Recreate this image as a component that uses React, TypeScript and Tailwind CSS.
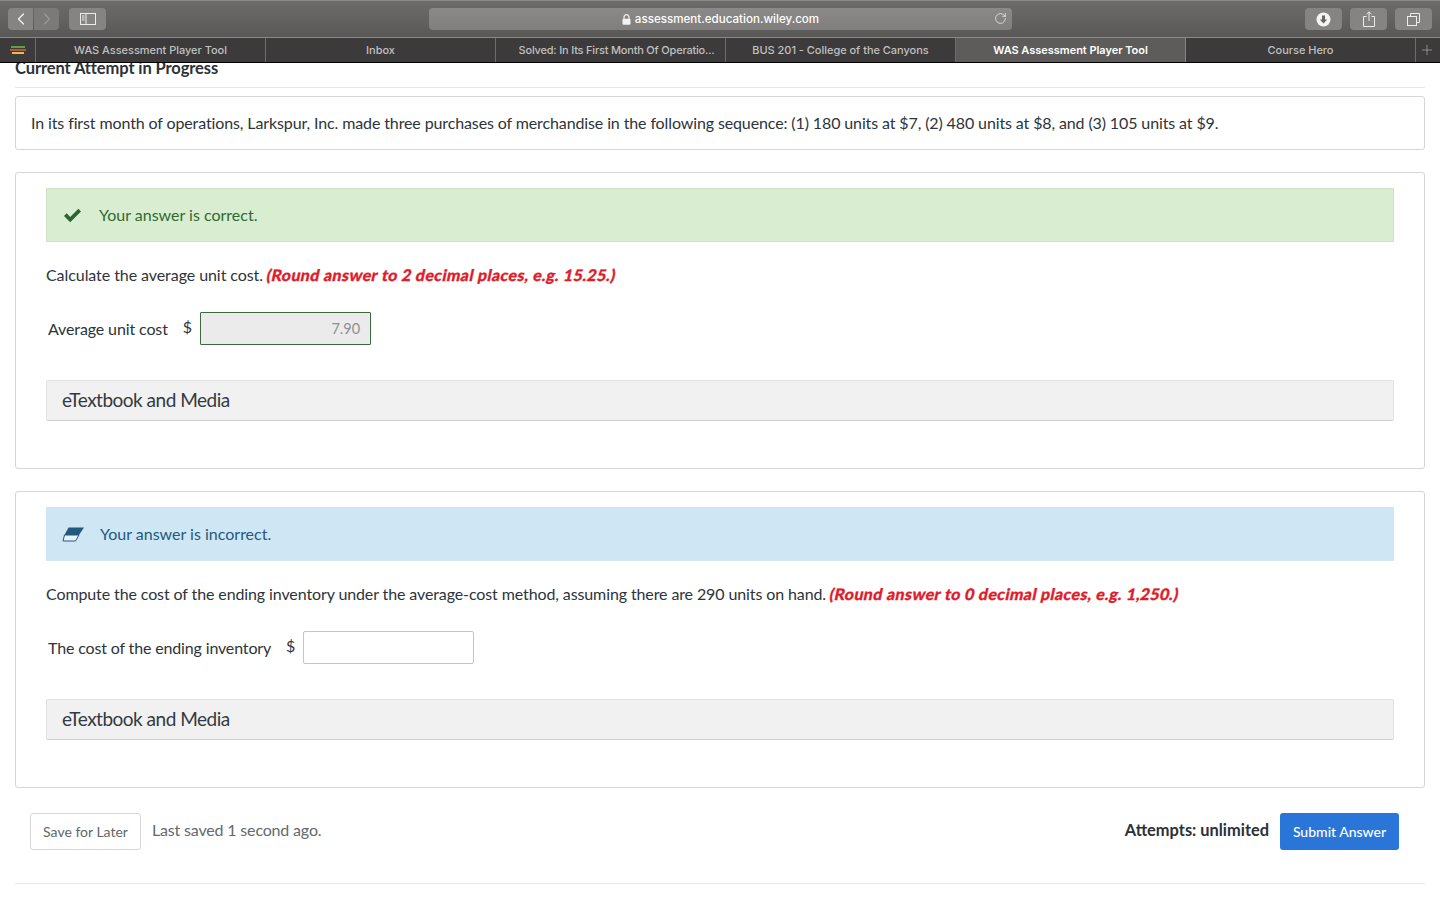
import { ChevronLeft, ChevronRight, Plus, RotateCw } from "lucide-react"

const tabs = [
  "WAS Assessment Player Tool",
  "Inbox",
  "Solved: In Its First Month Of Operatio...",
  "BUS 201 - College of the Canyons",
  "WAS Assessment Player Tool",
  "Course Hero",
]

function Toolbar() {
  return (
    <div className="flex h-[37px] items-center border-t border-[#8a8987] bg-gradient-to-b from-[#6d6c6a] to-[#595856] pl-2 pr-[8px]">
      <div className="flex gap-px">
        <div className="flex h-[22px] w-[25px] items-center justify-center rounded-l-[4px] bg-[#858482]">
          <ChevronLeft size={20} strokeWidth={1.6} className="text-[#f1f1f1]" />
        </div>
        <div className="flex h-[22px] w-[25px] items-center justify-center rounded-r-[4px] bg-[#7b7a78]">
          <ChevronRight size={20} strokeWidth={1.4} className="text-[#9a9997]" />
        </div>
      </div>
      <div className="ml-[10px] flex h-[22px] w-[37px] items-center justify-center rounded-[4px] bg-[#858482]">
        <svg width="16" height="12" viewBox="0 0 16 12" fill="none" stroke="#ececec" strokeWidth="1">
          <rect x="0.5" y="0.5" width="15" height="11" />
          <path d="M6 0.5v11" />
          <path d="M2 3h2.5M2 5h2.5M2 7h2.5" />
        </svg>
      </div>
      <div className="relative ml-[323px] flex h-[22px] w-[583px] items-center justify-center rounded-[4px] bg-gradient-to-b from-[#8b8a88] to-[#807f7d] text-[11.6px] text-white">
        <svg width="9" height="11" viewBox="0 0 9 11" className="mr-[4px]">
          <path d="M2 5V3.2a2.5 2.5 0 0 1 5 0V5" fill="none" stroke="#f2f2f2" strokeWidth="1.2" />
          <rect x="0.5" y="4.8" width="8" height="6" rx="1" fill="#f2f2f2" />
        </svg>
        <span className="mt-[1px] font-['Inter','Liberation_Sans',sans-serif] font-medium">assessment.education.wiley.com</span>
        <RotateCw size={13} strokeWidth={1.4} className="absolute right-[5px] top-[4px] text-[#eeeeee]" />
      </div>
      <div className="ml-auto flex gap-[8px]">
        <div className="flex h-[22px] w-[37px] items-center justify-center rounded-[4px] bg-[#858482]">
          <svg width="15" height="15" viewBox="0 0 15 15">
            <circle cx="7.5" cy="7.5" r="7" fill="#f4f4f4" />
            <path d="M6 3.5h3v4h2.2L7.5 11.5 3.8 7.5H6z" fill="#666563" />
          </svg>
        </div>
        <div className="flex h-[22px] w-[37px] items-center justify-center rounded-[4px] bg-[#858482]">
          <svg width="12" height="16" viewBox="0 0 12 16" fill="none" stroke="#ececec" strokeWidth="1">
            <path d="M3.5 5.5H0.5v10h11v-10H8.5" />
            <path d="M6 10V1M3.5 3.2L6 0.8l2.5 2.4" />
          </svg>
        </div>
        <div className="flex h-[22px] w-[37px] items-center justify-center rounded-[4px] bg-[#858482]">
          <svg width="13" height="13" viewBox="0 0 13 13" fill="none" stroke="#ececec" strokeWidth="1">
            <rect x="0.5" y="3.5" width="9" height="9" />
            <path d="M3.5 3.5v-3h9v9h-3" />
          </svg>
        </div>
      </div>
    </div>
  )
}

function TabBar() {
  return (
    <div className="flex h-[26px] border-y border-t-[#8a8987] border-b-black bg-[#3c3a3a] text-center font-['Inter','Liberation_Sans',sans-serif] text-[11px] tracking-[-0.03px] text-[#c0c0c0]">
      <div className="flex w-[36px] shrink-0 flex-col items-center justify-center gap-px border-r border-[#6e6d6c]">
        <div className="h-[2px] w-[14px] bg-[#5f9e46]" />
        <div className="h-[2px] w-[16px] bg-[#b4553c]" />
        <div className="h-[2px] w-[12px] bg-[#d9c25a]" />
      </div>
      {tabs.map((t, i) => (
        <div
          key={i}
          className={
            i === 4
              ? "flex w-[230px] shrink-0 items-center justify-center border-r border-[#858483] bg-[#5d5c5a] font-semibold text-white"
              : "flex w-[230px] shrink-0 items-center justify-center border-r border-[#6e6d6c] font-medium"
          }
        >
          <span className={i === 2 ? "ml-[12px] truncate tracking-[-0.2px]" : "truncate px-1"}>{t}</span>
        </div>
      ))}
      <div className="flex flex-1 items-center justify-center pr-[2px]">
        <Plus size={16} strokeWidth={1} className="text-[#b5b5b5]" />
      </div>
    </div>
  )
}

function Media() {
  return (
    <div className="flex h-[41px] items-center rounded-[2px] border border-[#e2e2e2] border-b-[#cfcfcf] bg-[#f1f1f1] pl-[15px] text-[19px] tracking-[-0.5px] text-[#333a41]">
      eTextbook and Media
    </div>
  )
}

export default function App() {
  return (
    <div className="h-[900px] w-[1440px] overflow-hidden bg-white font-['Lato','Liberation_Sans',sans-serif] text-[#2d343a]">
      <div className="relative z-10">
        <Toolbar />
        <TabBar />
      </div>
      <div className="px-[15px]">
        <div className="-mt-[3px] h-[28px] border-b border-[#e8e8e8] text-[16.5px] font-bold leading-[17px] tracking-[-0.1px] text-[#2a3138]">
          Current Attempt in Progress
        </div>
        <div className="mt-[8px] flex h-[54px] items-center rounded-[3px] border border-[#d6d6d6] pl-[15px] text-[16px] tracking-[-0.118px]">
          In its first month of operations, Larkspur, Inc. made three purchases of merchandise in the following sequence: (1) 180 units at $7, (2) 480 units at $8, and (3) 105 units at $9.
        </div>

        <div className="mt-[22px] h-[297px] rounded-[3px] border border-[#d6d6d6] px-[30px] pt-[15px]">
          <div className="flex h-[54px] items-center border border-[#cfe3c4] bg-[#d9edd0] pl-[16px] text-[16px] text-[#2f6a33]">
            <svg width="19" height="15" viewBox="0 0 19 15" fill="#2b6530">
              <path d="M1 8l2.6-2.7 3.6 3.6L15.4 0.8 18 3.5 7.2 14.3z" />
            </svg>
            <span className="ml-[17px]">Your answer is correct.</span>
          </div>
          <div className="mt-[22px] h-[22px] text-[16px] leading-[22px]">
            <span className="tracking-[-0.07px]">Calculate the average unit cost.</span>{" "}
            <span className="inline-block -skew-x-12 font-black tracking-[0.38px] text-[#e01c2a] [-webkit-text-stroke:0.3px_#e01c2a]">(Round answer to 2 decimal places, e.g. 15.25.)</span>
          </div>
          <div className="mt-[26px] flex items-center pl-[2px]">
            <span className="mt-[1px] text-[16px] tracking-[-0.12px]">Average unit cost</span>
            <span className="ml-[15px] -mt-[3px] text-[16px]">$</span>
            <div className="ml-[8px] flex h-[33px] w-[171px] items-center justify-end rounded-[1px] border border-[#386b3e] bg-[#ebebeb] pr-[10px] text-[14.5px] text-[#8f8f8f]">
              7.90
            </div>
          </div>
          <div className="mt-[35px]">
            <Media />
          </div>
        </div>

        <div className="mt-[22px] h-[297px] rounded-[3px] border border-[#d6d6d6] px-[30px] pt-[15px]">
          <div className="flex h-[54px] items-center bg-[#cfe6f5] pl-[16px] text-[16px] text-[#22597f]">
            <svg width="23" height="15" viewBox="0 0 23 15">
              <path d="M6.5 0.5H22L17 8H2.5z" fill="#22597f" />
              <path d="M2.5 8H17L13.5 14H1z" fill="#e8f2f9" stroke="#22597f" strokeWidth="1" />
            </svg>
            <span className="ml-[15px]">Your answer is incorrect.</span>
          </div>
          <div className="mt-[22px] h-[22px] text-[16px] leading-[22px]">
            <span className="tracking-[-0.11px]">Compute the cost of the ending inventory under the average-cost method, assuming there are 290 units on hand.</span>{" "}
            <span className="inline-block -skew-x-12 font-black tracking-[0.38px] text-[#e01c2a] [-webkit-text-stroke:0.3px_#e01c2a]">(Round answer to 0 decimal places, e.g. 1,250.)</span>
          </div>
          <div className="mt-[26px] flex items-center pl-[2px]">
            <span className="mt-[1px] text-[16px] tracking-[-0.15px]">The cost of the ending inventory</span>
            <span className="ml-[15px] -mt-[3px] text-[16px]">$</span>
            <div className="ml-[8px] h-[33px] w-[171px] rounded-[2px] border border-[#c4c4c4] bg-white" />
          </div>
          <div className="mt-[35px]">
            <Media />
          </div>
        </div>

        <div className="mt-[25px] flex items-center pl-[15px] pr-[26px]">
          <button className="h-[37px] w-[111px] rounded-[3px] border border-[#d6d6d6] bg-white text-[14px] text-[#5f666b]">
            Save for Later
          </button>
          <span className="ml-[11px] -mt-[3px] text-[16px] tracking-[-0.17px] text-[#62696e]">Last saved 1 second ago.</span>
          <span className="ml-auto -mt-[3px] text-[16.4px] font-bold text-[#2a3138]">Attempts: unlimited</span>
          <button className="ml-[11px] h-[37px] w-[119px] rounded-[3px] bg-[#2a76d8] text-[14px] font-medium text-white">
            Submit Answer
          </button>
        </div>
        <div className="mt-[33px] border-t border-[#e8e8e8]" />
      </div>
    </div>
  )
}
